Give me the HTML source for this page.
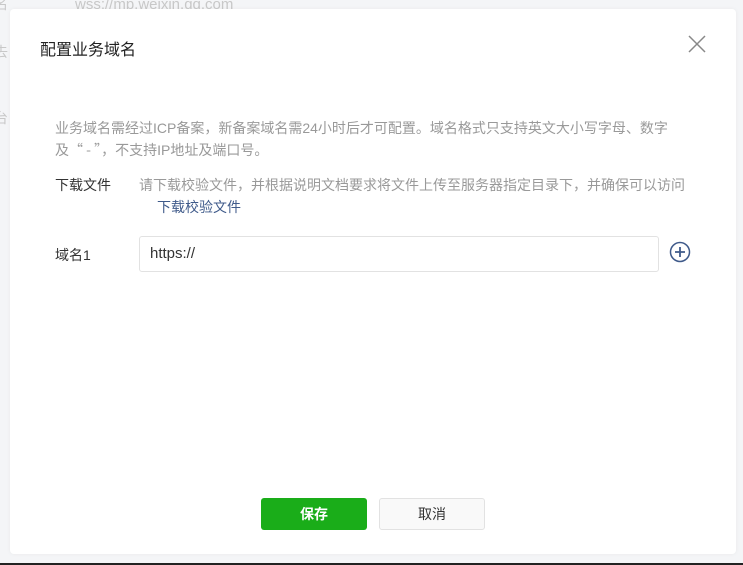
<!DOCTYPE html>
<html><head><meta charset="utf-8"><style>
body{margin:0;width:743px;height:565px;background:#f4f5f7;position:relative;overflow:hidden;font-family:"Liberation Sans","Noto Sans CJK SC",sans-serif;}
.bg{position:absolute;color:#c8c8c8;font-size:14px}
.dlg{position:absolute;left:10px;top:9px;width:726px;height:545px;background:#fff;border-radius:4px;box-shadow:0 0 4px rgba(0,0,0,.05)}
.t{position:absolute;font-size:14px;white-space:nowrap}
.cj{font-family:"Noto Sans CJK SC",sans-serif}
</style></head><body>
<div class="bg" style="left:75px;top:-4px;font-size:15px">wss://mp.weixin.qq.com</div>
<div class="bg" style="left:-6px;top:-6px">名</div>
<div class="bg" style="left:-6px;top:42px">去</div>
<div class="bg" style="left:-6px;top:108px">台</div>
<div style="position:absolute;left:0;right:0;top:563px;height:2px;background:#222"></div>
<div class="dlg">
<div class="t" style="left:30px;top:27px;font-size:16px;color:#222">配置业务域名</div>
<svg style="position:absolute;left:678px;top:26px" width="18" height="18"><path d="M1 1L17 17M17 1L1 17" stroke="#888" stroke-width="1.5"/></svg>
<div class="t" style="left:45px;top:108px;color:#999;line-height:22px">业务域名需经过ICP备案，新备案域名需24小时后才可配置。域名格式只支持英文大小写字母、数字<br>及<span class="cj">“ - ”</span>，不支持IP地址及端口号。</div>
<div class="t" style="left:45px;top:166px;color:#333">下载文件</div>
<div class="t" style="left:129px;top:166px;color:#999">请下载校验文件，并根据说明文档要求将文件上传至服务器指定目录下，并确保可以访问</div>
<div class="t" style="left:147px;top:188px;color:#3f5a8a">下载校验文件</div>
<div class="t" style="left:45px;top:236px;color:#333">域名1</div>
<div style="position:absolute;left:129px;top:227px;width:518px;height:34px;border:1px solid #e2e2e2;border-radius:3px"></div>
<div class="t" style="left:140px;top:236px;color:#333;font-size:15px">https://</div>
<svg style="position:absolute;left:659px;top:232px" width="22" height="22"><circle cx="11" cy="11" r="9.5" fill="none" stroke="#3f5a8a" stroke-width="1.5"/><path d="M11 6V16M6 11H16" stroke="#3f5a8a" stroke-width="1.8"/></svg>
<div style="position:absolute;left:251px;top:489px;width:106px;height:32px;background:#1aad19;border-radius:3px;color:#fff;font-size:14px;text-align:center;line-height:32px;font-weight:bold">保存</div>
<div style="position:absolute;left:369px;top:489px;width:104px;height:30px;background:#f9f9f9;border:1px solid #e2e2e2;border-radius:3px;color:#333;font-size:14px;text-align:center;line-height:30px">取消</div>
</div>
</body></html>
